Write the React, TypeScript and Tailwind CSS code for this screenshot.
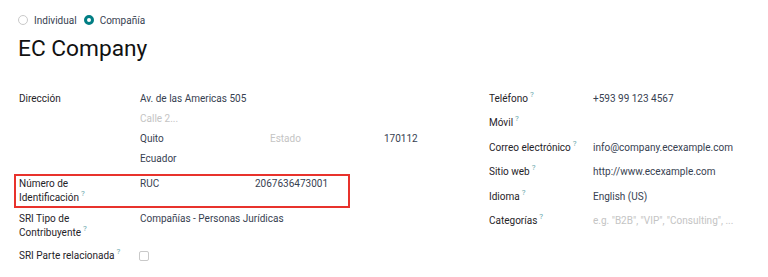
import React from 'react';

function Help() {
  return <span className="ml-[2px] text-[8px] leading-none text-[#6aa7ad] relative -top-[5px]">?</span>;
}

function Radio({ checked, label }: { checked?: boolean; label: string }) {
  return (
    <label className="flex items-center gap-[6px]">
      {checked ? (
        <span className="w-[10px] h-[10px] rounded-full border-[3px] border-[#017e84] bg-white" />
      ) : (
        <span className="w-[10px] h-[10px] rounded-full border border-[#c9c9c9] bg-white" />
      )}
      <span>{label}</span>
    </label>
  );
}

export default function App() {
  return (
    <div
      className="w-[768px] h-[277px] bg-white text-[10px] text-[#1f2328] overflow-hidden"
      style={{ fontFamily: 'Roboto, "Noto Sans", sans-serif' }}
    >
      <div className="pl-[18px] pt-[14px]">
        <div className="flex items-center gap-[7px] h-[12px] text-[#374151]">
          <Radio label="Individual" />
          <Radio checked label="Compañía" />
        </div>
        <h1 className="mt-[8px] text-[22.7px] leading-[30px] text-[#111]">EC Company</h1>
      </div>

      <div className="flex mt-[25px]">
        {/* left column */}
        <div className="w-[355px] shrink-0 pl-[14px]">
          <div className="flex px-[5px]">
            <div className="w-[121px] shrink-0 leading-[20px]">Dirección</div>
            <div className="flex-1 leading-[20px] text-[#374151]">
              <div>Av. de las Americas 505</div>
              <div className="text-[#c4c4c4]">Calle 2...</div>
              <div className="flex">
                <span className="w-[130px]">Quito</span>
                <span className="w-[114px] text-[#c4c4c4]">Estado</span>
                <span>170112</span>
              </div>
              <div>Ecuador</div>
            </div>
          </div>

          <div className="mt-[5px] w-[336px] border-2 border-[#e8322c] flex px-[3px] py-[1px] leading-[14px]">
            <div className="w-[121px] shrink-0">
              Número de<br />Identificación<Help />
            </div>
            <div className="flex text-[#374151]">
              <span className="w-[115px]">RUC</span>
              <span>2067636473001</span>
            </div>
          </div>

          <div className="mt-[4px] flex px-[5px] leading-[14px]">
            <div className="w-[121px] shrink-0">
              SRI Tipo de<br />Contribuyente<Help />
            </div>
            <div className="text-[#374151]">Compañías - Personas Jurídicas</div>
          </div>

          <div className="mt-[9px] flex items-center px-[5px] leading-[14px]">
            <div className="w-[120px] shrink-0">
              SRI Parte relacionada<Help />
            </div>
            <span className="w-[10px] h-[10px] border border-[#c9c9c9] rounded-[2px]" />
          </div>
        </div>

        {/* right column */}
        <div className="ml-[134px] flex flex-col">
          {[
            ['Teléfono', '+593 99 123 4567', false],
            ['Móvil', '', false],
            ['Correo electrónico', 'info@company.ecexample.com', false],
            ['Sitio web', 'http://www.ecexample.com', false],
            ['Idioma', 'English (US)', false],
            ['Categorías', 'e.g. "B2B", "VIP", "Consulting", ...', true],
          ].map(([label, value, ph]) => (
            <div key={label as string} className="flex h-[24.4px] leading-[20px]">
              <div className="w-[104px] shrink-0 whitespace-nowrap">
                {label}
                <Help />
              </div>
              <div className={ph ? 'text-[#c4c4c4] whitespace-nowrap' : 'text-[#374151] whitespace-nowrap'}>{value}</div>
            </div>
          ))}
        </div>
      </div>
    </div>
  );
}
